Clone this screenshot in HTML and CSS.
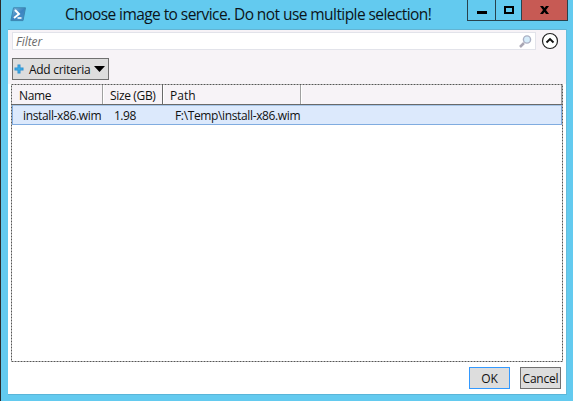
FILE: index.html
```html
<!DOCTYPE html>
<html lang="en">
<head>
<meta charset="utf-8">
<title>Choose image to service</title>
<link rel="stylesheet" href="styles.css">
</head>
<body>
<div class="window">
  <header class="titlebar">
    <svg class="app-icon" width="17" height="15" viewBox="0 0 17 15">
      <defs><linearGradient id="ps" x1="0" y1="0" x2="1" y2="1"><stop offset="0" stop-color="#8fbfe0"/><stop offset=".5" stop-color="#3b84c0"/><stop offset="1" stop-color="#4c93cb"/></linearGradient></defs>
      <path d="M3.500.8H15.500L13 13.600H.9z" fill="url(#ps)" stroke="#3b86b0"/>
      <path d="M5 3l4 4-5 4" fill="none" stroke="#fff" stroke-width="2"/>
      <path d="M7.500 11h4" stroke="#fff" stroke-width="1.600"/>
    </svg>
    <h1 class="title">Choose image to service. Do not use multiple selection!</h1>
    <div class="controls">
      <div class="control minimize"><svg width="10" height="10"><path d="M0 7.500h10" stroke="#000" stroke-width="3"/></svg></div>
      <div class="control maximize"><svg width="10" height="10"><path d="M1 2h8v6H1z" fill="none" stroke="#000" stroke-width="2"/></svg></div>
      <div class="control close"><svg width="9" height="8" viewBox="0 0 9 8"><path d="M0 0h3l1.500 2L6 0h3L6 4l3 4H6L4.500 6 3 8H0l3-4z"/></svg></div>
    </div>
  </header>
  <main class="client">
    <div class="filter-row">
      <div class="filter"><span class="placeholder">Filter</span>
        <svg class="search" width="13" height="13" viewBox="0 0 13 13"><path d="M1 12l4-4" stroke="#a9a6b4" stroke-width="2.500"/><circle cx="8" cy="4.500" r="3.600" fill="#d5ecfa" stroke="#aab0c4" stroke-width="1.400"/></svg>
      </div>
      <svg class="expander" width="18" height="18" viewBox="0 0 18 18"><circle cx="9" cy="9" r="7.500" fill="#fff" stroke="#222" stroke-width="1.200"/><path d="M5.500 10.500L9 7l3.500 3.500" fill="none" stroke="#111" stroke-width="1.900"/></svg>
    </div>
    <div class="criteria-row">
      <div class="button criteria">
        <svg width="10" height="10" viewBox="0 0 10 10"><path d="M5 .5v9M.5 5h9" stroke="#2d91d2" stroke-width="3"/><path d="M5 1.500v7M1.500 5h7" stroke="#45b2ea"/></svg>
        <span class="criteria-label">Add criteria</span>
        <svg width="11" height="6"><path d="M0 0h11L5.500 6z"/></svg>
      </div>
    </div>
    <div class="list">
      <svg class="focus"><rect x=".5" y=".5" width="551" height="277"/></svg>
      <div class="columns">
        <div class="column name"><span class="h-name">Name</span></div>
        <div class="column size"><span class="h-size">Size (GB)</span></div>
        <div class="column path"><span class="h-path">Path</span></div>
        <div class="column filler"></div>
      </div>
      <div class="row">
        <div class="cell name"><span class="c-name">install-x86.wim</span></div>
        <div class="cell size"><span class="c-size">1.98</span></div>
        <div class="cell path"><span class="c-path">F:\Temp\install-x86.wim</span></div>
      </div>
    </div>
    <footer class="actions">
      <div class="button ok"><span>OK</span></div>
      <div class="button cancel"><span class="t-cancel">Cancel</span></div>
    </footer>
  </main>
</div>
</body>
</html>
```
FILE: styles.css
```css
* { box-sizing: border-box; }
body { margin: 0; overflow: hidden; font: 12px/16px "Open Sans", "Noto Sans", sans-serif; color: #111; }
svg { display: block; flex: none; }
span, h1 { white-space: nowrap; }
.window { width: 573px; height: 401px; background: #63caef; border-left: 1px solid #2b2b2b; padding-left: 7px; }
.titlebar { display: flex; height: 29px; }
.app-icon { margin: 7px 0 0 2px; }
.title { margin: 3px 0 0 38px; width: 402px; font-size: 15.5px; line-height: 23px; font-weight: 400; letter-spacing: -0.57px; color: #0b1419; }
.controls { display: flex; width: 101px; height: 21px; border: 1px solid #28424d; border-top: 0; }
.control { display: flex; align-items: center; justify-content: center; border-right: 1px solid #28424d; }
.minimize { width: 28px; }
.maximize { width: 26px; }
.close { flex: 1; background: #c75a54; border: 0; }
.client { width: 559px; height: 366px; background: linear-gradient(#f7f3f7 54px, #fff 54px); border-top: 1px solid #62b4d3; border-bottom: 1px solid #5ab5d8; border-right: 1px solid #64bddd; }
.filter-row { display: flex; padding: 2px 0 0 4px; height: 28px; }
.filter { display: flex; align-items: center; justify-content: space-between; width: 524px; height: 18px; background: #fff; border: 1px solid #e2e3ea; padding: 0 3px; }
.placeholder { padding-top: 1px; font-style: italic; color: #6c6c6c; letter-spacing: -0.05px; }
.expander { margin-left: 5px; }
.criteria-row { padding-left: 4px; height: 26px; }
.button { display: flex; align-items: center; justify-content: center; height: 22px; background: #ddd; border: 1px solid #707070; }
.button span { padding-top: 1px; }
.criteria { width: 97px; justify-content: flex-start; padding-left: 1px; }
.criteria-label { margin-left: 5px; width: 65px; letter-spacing: -0.28px; }
.list { position: relative; margin-left: 3px; width: 552px; height: 278px; background: #fff; padding: 1px; }
.focus { position: absolute; inset: 0; width: 552px; height: 278px; }
.focus rect { fill: none; stroke: #555; stroke-dasharray: 2 1; }
.columns { display: flex; height: 20px; background: #f7f3f7; border-bottom: 1px solid #696969; }
.column { border-right: 1px solid #a0a0a0; padding: 3px 0 0 7px; }
.column + .column { box-shadow: inset 1px 0 #fff; }
.column.size { border-right-color: #696969; }
.column.filler { flex: 1; }
.name { width: 91px; }
.size { width: 60px; }
.path { width: 138px; }
.h-name, .h-size { letter-spacing: -0.35px; }
.row { display: flex; height: 20px; background: #dce9fc; border: 1px solid #80ace0; border-top-color: #a7c6e8; }
.cell { padding: 2px 0 0 10px; }
.cell.path { padding-left: 11px; }
.c-name, .c-path { letter-spacing: -0.36px; }
.c-size { letter-spacing: -0.5px; }
.actions { display: flex; gap: 10px; padding: 5px 0 0 461px; }
.ok { width: 41px; border-color: #3399ff; }
.cancel { width: 41px; }
.t-cancel { letter-spacing: -0.2px; }
```
